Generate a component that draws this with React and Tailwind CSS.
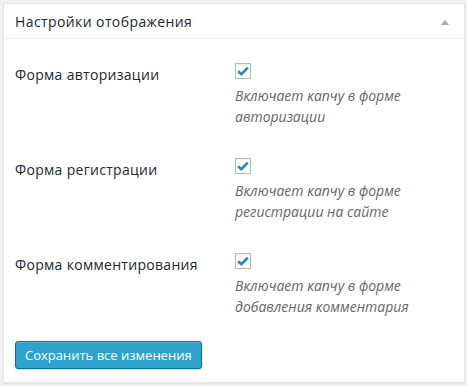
const rows = [
  { label: 'Форма авторизации', desc: ['Включает капчу в форме', 'авторизации'] },
  { label: 'Форма регистрации', desc: ['Включает капчу в форме', 'регистрации на сайте'] },
  { label: 'Форма комментирования', desc: ['Включает капчу в форме', 'добавления комментария'] },
]

function CheckBox() {
  return (
    <span className="flex w-[16px] h-[16px] items-center justify-center border border-[#b4b9be] bg-white shadow-[inset_0_1px_2px_rgba(0,0,0,0.07)]">
      <svg width="12" height="10" viewBox="0 0 12 10">
        <path d="M1.2 5.2 L4.4 8.2 L10.8 1.6" fill="none" stroke="#1e8cbe" strokeWidth="2.6" strokeLinejoin="miter" />
      </svg>
    </span>
  )
}

export default function App() {
  return (
    <div className="w-[467px] h-[386px] bg-[#f1f1f1] p-[3px] pr-[2px] pb-[3px]" style={{ fontFamily: '"Open Sans", "Noto Sans", sans-serif' }}>
      <div className="h-[380px] bg-white border border-[#e5e5e5] shadow-[0_1px_1px_rgba(0,0,0,0.04)] flex flex-col">
        {/* Header */}
        <div className="flex items-center justify-between h-[35px] px-[11px] border-b border-[#eeeeee]">
          <span className="text-[14px] tracking-[0.4px] text-[#23282d]">Настройки отображения</span>
          <svg width="8" height="5" viewBox="0 0 8 5" className="mr-[4px] mt-[2px]">
            <path d="M0 5 L4 0 L8 5 Z" fill="#aaaaaa" />
          </svg>
        </div>

        {/* Body */}
        <div className="px-[11px] pt-[6px]">
          {rows.map((r, i) => (
            <div key={i} className="flex pb-[13px]">
              <div className="w-[220px] pt-[20px] text-[14px] leading-[20px] tracking-[0.3px] text-[#23282d]">{r.label}</div>
              <div className="pt-[18px]">
                <CheckBox />
                <p className="mt-[6px] text-[14px] leading-[21px] italic text-[#666666]">
                  {r.desc[0]}
                  <br />
                  {r.desc[1]}
                </p>
              </div>
            </div>
          ))}
          <button className="mt-[11px] h-[28px] px-[9px] rounded-[3px] bg-[#2ea2cc] border border-[#0074a2] text-white text-[13px] leading-[26px] shadow-[inset_0_1px_0_rgba(120,200,230,0.5),0_1px_0_rgba(0,0,0,0.15)]">
            Сохранить все изменения
          </button>
        </div>
      </div>
    </div>
  )
}
